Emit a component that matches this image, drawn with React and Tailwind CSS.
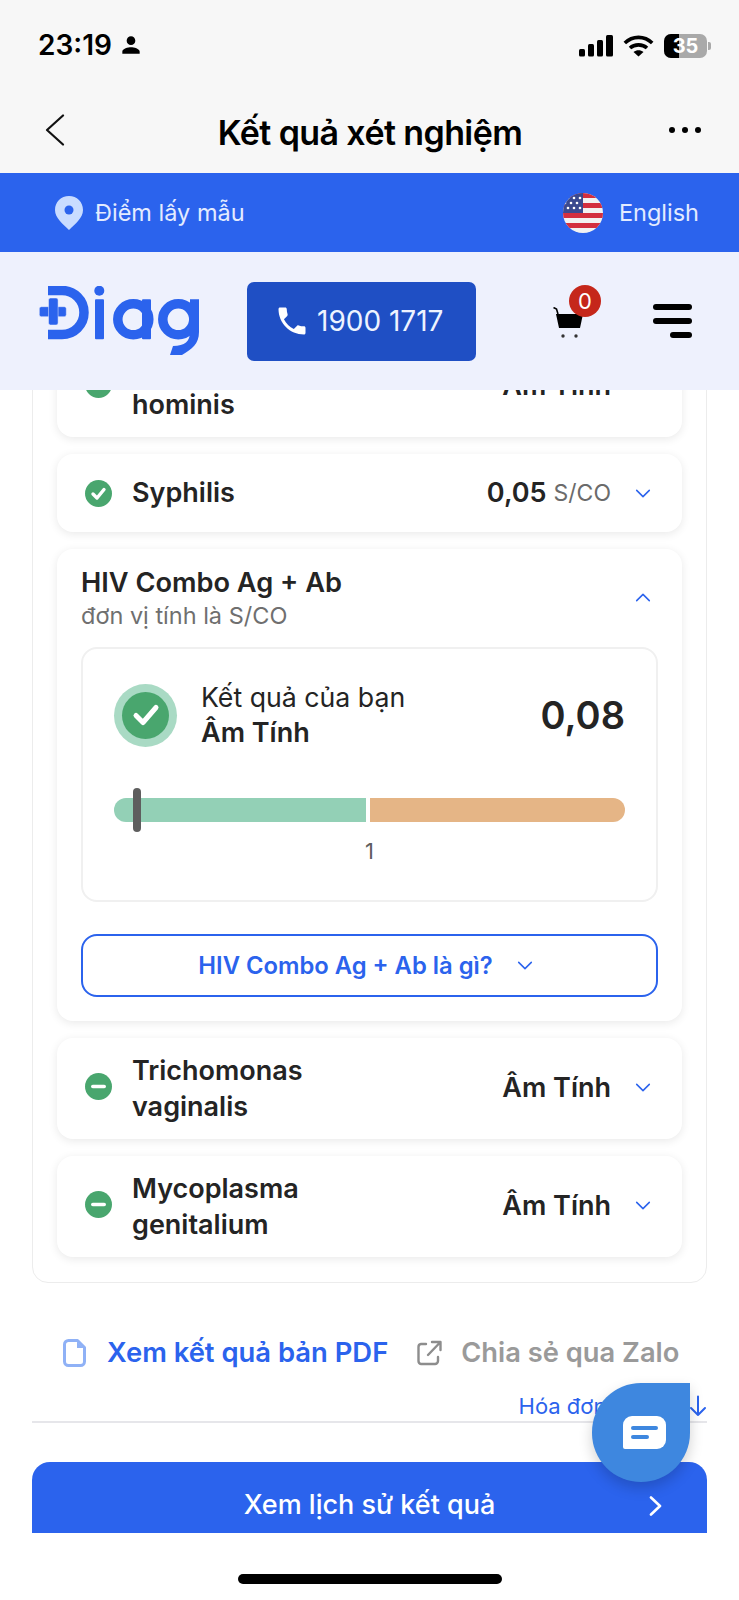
import React from "react";
import { MdPhone, MdPerson } from "react-icons/md";

const Chevron = ({ up = false, className = "" }) => (
  <svg width="16" height="9" viewBox="0 0 17 10" fill="none" className={className}>
    <path d={up ? "M1.5 8.5 L8.5 1.5 L15.5 8.5" : "M1.5 1.5 L8.5 8.5 L15.5 1.5"} stroke="#2b63ed" strokeWidth="1.7" strokeLinecap="round" strokeLinejoin="round" />
  </svg>
);

const CheckDot = () => (
  <svg width="27" height="27" viewBox="0 0 27 27" className="shrink-0">
    <circle cx="13.5" cy="13.5" r="13.5" fill="#49a66e" />
    <path d="M8 14 L12 18 L19 9.5" fill="none" stroke="#fff" strokeWidth="3.4" strokeLinecap="round" strokeLinejoin="round" />
  </svg>
);

const MinusDot = () => (
  <svg width="27" height="27" viewBox="0 0 27 27" className="-mt-[4px] shrink-0">
    <circle cx="13.5" cy="13.5" r="13.5" fill="#49a66e" />
    <rect x="6" y="11.7" width="15" height="3.6" rx="1.8" fill="#fff" />
  </svg>
);

const TwoLineRow = ({ first, second }) => (
  <div className="flex h-[101px] items-center rounded-[16px] bg-white pl-[28px] pr-[31px] shadow-[0_2px_10px_rgba(0,0,0,0.09)]">
    <MinusDot />
    <div className="ml-[20px] flex-1 text-[27px] font-semibold leading-[36px] text-[#242424]">
      <div>{first}</div>
      <div>{second}</div>
    </div>
    <span className="text-[27px] font-semibold text-[#242424]">Âm Tính</span>
    <Chevron className="-mt-[3px] ml-[24px]" />
  </div>
);

const Logo = () => (
  <svg width="161" height="70" viewBox="19 16 161 70" fill="none">
    <path d="M28 20.5 H42 A22 22 0 0 1 42 64.5 H28" stroke="#2b63ed" strokeWidth="9.5" />
    <rect x="28" y="16" width="9" height="9" fill="#2b63ed" />
    <rect x="28" y="60" width="9" height="9" fill="#2b63ed" />
    <rect x="19.3" y="36.7" width="27" height="10" rx="2" fill="#2b63ed" stroke="#eef1fd" strokeWidth="0.5" />
    <rect x="28.5" y="28" width="9.6" height="27" rx="2" fill="#2b63ed" stroke="#eef1fd" strokeWidth="0.5" />
    <circle cx="79.3" cy="20.7" r="5" fill="#2b63ed" />
    <rect x="75" y="29.3" width="9" height="40" rx="1" fill="#2b63ed" />
    <circle cx="113.3" cy="49.3" r="15.5" stroke="#2b63ed" strokeWidth="9.5" />
    <rect x="122" y="29.3" width="9" height="40" rx="1" fill="#2b63ed" />
    <circle cx="158.3" cy="49.3" r="15.5" stroke="#2b63ed" strokeWidth="9.5" />
    <path d="M170 29.3 H179 V62 C179 74 172 79 162 85 H150 L153 76 C165 76 170 71 170 62 Z" fill="#2b63ed" />
  </svg>
);

const Flag = () => (
  <svg width="40" height="40" viewBox="0 0 40 40">
    <defs>
      <clipPath id="flagClip"><circle cx="20" cy="20" r="20" /></clipPath>
    </defs>
    <g clipPath="url(#flagClip)">
      <rect width="40" height="40" fill="#f2f2f2" />
      <rect y="0" width="40" height="5" fill="#d32f3f" />
      <rect y="10" width="40" height="5" fill="#d32f3f" />
      <rect y="20" width="40" height="5" fill="#d32f3f" />
      <rect y="30" width="40" height="5" fill="#d32f3f" />
      <rect width="20" height="20" fill="#3b4a8f" />
      {[[5, 5], [11, 5], [17, 5], [8, 10], [14, 10], [5, 15], [11, 15], [17, 15], [2, 10]].map(([x, y]) => (
        <circle key={`${x}-${y}`} cx={x} cy={y} r="1.3" fill="#fff" />
      ))}
    </g>
  </svg>
);

const StatusIcons = () => (
  <div className="flex items-center">
    <svg width="35" height="22" viewBox="0 0 35 22" fill="#000">
      <rect x="0" y="14" width="6" height="7.5" rx="1.5" />
      <rect x="9" y="9" width="6" height="12.5" rx="1.5" />
      <rect x="18" y="5" width="6" height="16.5" rx="1.5" />
      <rect x="27" y="0" width="7" height="21.5" rx="1.5" />
    </svg>
    <svg width="31" height="22" viewBox="0 0 31 22" className="ml-[9px]" fill="none" stroke="#000" strokeWidth="3.6">
      <path d="M1.8 8 C9.5 0.5 21.5 0.5 29.2 8" />
      <path d="M7 13 C11.5 8.8 19.5 8.8 24 13" />
      <path d="M15.5 21.5 L10.5 17 C13.5 14.8 17.5 14.8 20.5 17 Z" fill="#000" stroke="none" />
    </svg>
    <div className="relative ml-[10px] flex h-[24px] w-[43px] items-center justify-center overflow-hidden rounded-[7px] bg-[#a9a9a9]">
      <div className="absolute inset-y-0 left-0 w-[15px] bg-black" />
      <span className="relative text-[20px] font-bold leading-none text-white">35</span>
    </div>
    <div className="ml-[1px] h-[8px] w-[3px] rounded-r-[2px] bg-[#a9a9a9]" />
  </div>
);

export default function App() {
  return (
    <div className="relative flex h-[1600px] w-[739px] flex-col overflow-hidden bg-white font-['Inter',sans-serif] text-[#242424]">
      {/* system + nav bar */}
      <div className="h-[173px] shrink-0 bg-[#f7f7f7]">
        <div className="flex h-[90px] items-start justify-between pl-[38px] pr-[28px] pt-[29px]">
          <div className="flex items-center">
            <span className="text-[28px] font-semibold leading-[32px] text-black">23:19</span>
            <MdPerson className="ml-[6px] text-[26px] text-black" />
          </div>
          <div className="pt-[5px]"><StatusIcons /></div>
        </div>
        <div className="relative flex h-[83px] items-center justify-between pb-[4px] pl-[45px] pr-[38px]">
          <svg width="20" height="32" viewBox="0 0 20 32" fill="none">
            <path d="M18 1.5 L2 16 L18 30.5" stroke="#111" strokeWidth="2.2" strokeLinecap="round" strokeLinejoin="round" />
          </svg>
          <span className="ml-[6px] pt-[6px] text-[34px] font-semibold tracking-[-0.6px] text-black">Kết quả xét nghiệm</span>
          <div className="flex gap-[7px]">
            <div className="h-[6px] w-[6px] rounded-full bg-black" />
            <div className="h-[6px] w-[6px] rounded-full bg-black" />
            <div className="h-[6px] w-[6px] rounded-full bg-black" />
          </div>
        </div>
      </div>

      {/* blue strip */}
      <div className="flex h-[79px] shrink-0 items-center justify-between bg-[#2b63ed] pl-[55px] pr-[40px]">
        <div className="flex items-center">
          <svg width="28" height="34" viewBox="0 0 28 34">
            <path d="M14 0 C6 0 0 6 0 14 C0 22 8 28 14 34 C20 28 28 22 28 14 C28 6 22 0 14 0 Z" fill="#c9dcff" />
            <circle cx="14" cy="14" r="4.5" fill="#2b63ed" />
          </svg>
          <span className="ml-[12px] text-[23.5px] text-[#e3ebff]">Điểm lấy mẫu</span>
        </div>
        <div className="flex items-center">
          <Flag />
          <span className="ml-[16px] text-[23.5px] text-[#e3ebff]">English</span>
        </div>
      </div>

      {/* logo bar */}
      <div className="flex h-[138px] shrink-0 items-center bg-[#eef1fd] pl-[39px] pr-[47px]">
        <Logo />
        <div className="ml-[47px] flex h-[79px] w-[229px] items-center rounded-[7px] bg-[#1f4fc4] pl-[27px]">
          <MdPhone className="text-[36px] text-white" />
          <span className="ml-[7px] text-[28px] text-[#eef3ff]">1900 1717</span>
        </div>
        <div className="relative ml-[77px] h-[50px] w-[36px]">
          <svg width="31" height="32" viewBox="0 0 31 32" className="absolute left-0 top-[11px]">
            <path d="M0.5 0.5 L3.5 2 L5 7" stroke="#000" strokeWidth="1.6" fill="none" />
            <path d="M3 7 H30 L27 21 H6 Z" fill="#000" />
            <circle cx="10" cy="29" r="1.7" fill="#333" />
            <circle cx="23" cy="29" r="1.7" fill="#333" />
          </svg>
          <div className="absolute left-[16px] top-[-11px] flex h-[32px] w-[32px] items-center justify-center rounded-full bg-[#c5271b] text-[22px] leading-none text-white">0</div>
        </div>
        <div className="ml-auto flex w-[39px] flex-col items-end gap-[8.5px]">
          <div className="h-[5.5px] w-full rounded-full bg-black" />
          <div className="h-[5.5px] w-full rounded-full bg-black" />
          <div className="h-[5.5px] w-[22px] rounded-full bg-black" />
        </div>
      </div>

      {/* scrolled content */}
      <div className="h-[1143px] shrink-0 overflow-hidden px-[32px]">
        <div className="-mt-[79px] flex flex-col gap-[17px] rounded-[16px] border border-[#ececec] px-[24px] pb-[25px] pt-[24px]">
          <TwoLineRow first="Mycoplasma" second="hominis" />

          <div className="flex h-[78px] items-center rounded-[16px] bg-white pl-[28px] pr-[31px] shadow-[0_2px_10px_rgba(0,0,0,0.09)]">
            <CheckDot />
            <span className="ml-[20px] flex-1 text-[27px] font-semibold text-[#242424]">Syphilis</span>
            <span className="text-[27px] font-semibold text-[#242424]">0,05</span>
            <span className="ml-[7px] text-[23px] text-[#6b6b6b]">S/CO</span>
            <Chevron className="ml-[24px]" />
          </div>

          <div className="rounded-[16px] bg-white px-[24px] pb-[24px] pt-[16px] shadow-[0_2px_10px_rgba(0,0,0,0.09)]">
            <div className="flex items-center justify-between pr-[7px]">
              <div>
                <div className="text-[27.2px] font-semibold leading-[36px] text-[#242424]">HIV Combo Ag + Ab</div>
                <div className="text-[23.5px] leading-[29px] text-[#6f6f6f]">đơn vị tính là S/CO</div>
              </div>
              <Chevron up />
            </div>

            <div className="mt-[17px] h-[255px] rounded-[16px] border-2 border-[#f0f0f0] px-[31px] pt-[31px]">
              <div className="flex items-center">
                <div className="flex h-[63px] w-[63px] shrink-0 items-center justify-center rounded-full bg-[#a9dac4]">
                  <div className="flex h-[47px] w-[47px] items-center justify-center rounded-full bg-[#49a66e]">
                    <svg width="28" height="24" viewBox="0 0 28 24" fill="none">
                      <path d="M4 12.5 L11 19.5 L24 4.5" stroke="#fff" strokeWidth="5" strokeLinecap="round" strokeLinejoin="round" />
                    </svg>
                  </div>
                </div>
                <div className="ml-[24px] flex-1">
                  <div className="text-[26.7px] leading-[35px] text-[#242424]">Kết quả của bạn</div>
                  <div className="text-[27px] font-semibold leading-[35px] text-[#242424]">Âm Tính</div>
                </div>
                <span className="text-[38px] font-semibold text-[#242424]">0,08</span>
              </div>

              <div className="relative mt-[48px] flex h-[24px] gap-[3.5px]">
                <div className="w-[252px] rounded-l-full rounded-r-[2px] bg-[#93d0b6]" />
                <div className="flex-1 rounded-l-[2px] rounded-r-full bg-[#e5b586]" />
                <div className="absolute left-[19px] top-[-10px] h-[44px] w-[8px] rounded-full bg-[#5e5e5e]" />
              </div>
              <div className="mt-[15px] text-center text-[22px] leading-[28px] text-[#5e5e5e]">1</div>
            </div>

            <div className="mt-[32px] flex h-[63px] items-center justify-center gap-[24px] rounded-[16px] border-2 border-[#2b63ed] pr-[8px]">
              <span className="text-[23.8px] font-semibold text-[#2b63ed]">HIV Combo Ag + Ab là gì?</span>
              <Chevron />
            </div>
          </div>

          <TwoLineRow first="Trichomonas" second="vaginalis" />
          <TwoLineRow first="Mycoplasma" second="genitalium" />
        </div>

        <div className="mt-[52px] flex h-[36px] items-center pl-[31px]">
          <svg width="23" height="28" viewBox="0 0 23 28" fill="none">
            <path d="M5.5 1.5 H14.5 L21.5 8.5 V22.5 A4 4 0 0 1 17.5 26.5 H5.5 A4 4 0 0 1 1.5 22.5 V5.5 A4 4 0 0 1 5.5 1.5 Z" fill="#fff" stroke="#8fb1f6" strokeWidth="3" strokeLinejoin="round" />
            <path d="M14 2.5 V9 H20.5 Z" fill="#8fb1f6" />
          </svg>
          <span className="ml-[21px] text-[27.4px] font-semibold text-[#2b63ed]">Xem kết quả bản PDF</span>
          <svg width="25" height="26" viewBox="0 0 25 26" fill="none" className="ml-[29px]" stroke="#8d8d8d" strokeWidth="2.4" strokeLinecap="round" strokeLinejoin="round">
            <path d="M9 4 H4 A3 3 0 0 0 1.5 7 V21 A3 3 0 0 0 4 24 H18 A3 3 0 0 0 21 21 V17" />
            <path d="M11 15 L23 2.5 M15 2 H23.5 V10" />
          </svg>
          <span className="ml-[19px] text-[27.3px] font-semibold text-[#9a9a9a]">Chia sẻ qua Zalo</span>
        </div>

        <div className="mt-[20px] flex h-[30px] items-center justify-end gap-[4px]">
          <span className="text-[22px] text-[#2b63ed]">Hóa đơn điện tử</span>
          <svg width="18" height="22" viewBox="0 0 18 22" fill="none" stroke="#2b63ed" strokeWidth="2" strokeLinecap="round" strokeLinejoin="round">
            <path d="M9 1.5 V20 M2 13 L9 20 L16 13" />
          </svg>
        </div>
        <div className="h-[2px] bg-[#e6e6ea]" />

        <div className="relative mt-[39px] flex h-[86px] items-center justify-center rounded-t-[18px] bg-[#2b63ed]">
          <span className="text-[27px] font-medium text-white">Xem lịch sử kết quả</span>
          <svg width="13" height="20" viewBox="0 0 13 20" fill="none" className="absolute right-[45px] top-[34px]">
            <path d="M2 1.5 L11 10 L2 18.5" stroke="#fff" strokeWidth="2.6" strokeLinecap="round" strokeLinejoin="round" />
          </svg>
        </div>
      </div>

      {/* home indicator */}
      <div className="flex flex-1 items-start justify-center pt-[41px]">
        <div className="h-[10px] w-[264px] rounded-full bg-black" />
      </div>

      {/* floating chat */}
      <div className="absolute left-[592px] top-[1383px] flex h-[99px] w-[98px] items-center justify-center rounded-full rounded-tr-[12px] bg-[#3e87df] shadow-[0_6px_14px_rgba(0,0,0,0.18)]">
        <div className="ml-[6px] flex h-[33px] w-[43px] flex-col justify-center gap-[5px] rounded-[9px] rounded-bl-[2px] bg-white px-[8px]">
          <div className="h-[4px] w-[27px] rounded-full bg-[#3e87df]" />
          <div className="h-[4px] w-[18px] rounded-full bg-[#3e87df]" />
        </div>
      </div>
    </div>
  );
}
